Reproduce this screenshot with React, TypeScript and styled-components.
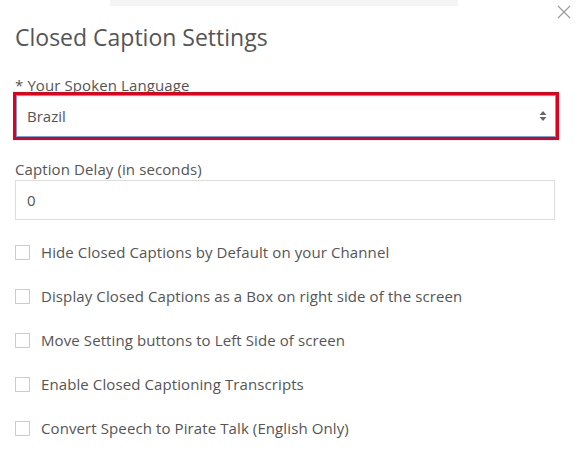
import React from "react";
import styled, { createGlobalStyle } from "styled-components";

const Global = createGlobalStyle`
  html, body { margin: 0; padding: 0; background: #fff; }
  body { font-family: "Open Sans", "Noto Sans", sans-serif; color: #555; }
  * { box-sizing: border-box; }
`;

const Page = styled.div`
  width: 583px;
  height: 470px;
  position: relative;
  overflow: hidden;
`;

const TopStrip = styled.div`
  height: 6px;
  width: 348px;
  margin-left: 110px;
  background: #f4f4f4;
`;

const CloseButton = styled.button`
  position: absolute;
  top: 4px;
  right: 11px;
  width: 16px;
  height: 16px;
  padding: 0;
  border: none;
  background: transparent;
  display: flex;
  align-items: center;
  justify-content: center;
`;

const Body = styled.div`
  padding: 0 28px 0 15px;
  display: flex;
  flex-direction: column;
`;

const Title = styled.h1`
  margin: 16px 0 0;
  font-size: 23px;
  font-weight: 400;
  line-height: 30px;
  color: #555;
`;

const Label = styled.label<{ $mt: number }>`
  display: block;
  font-size: 15px;
  line-height: 20px;
  letter-spacing: 0.1px;
  color: #555;
  margin-top: ${(p) => p.$mt}px;
`;

const Req = styled.abbr`
  text-decoration: underline dotted;
  text-underline-offset: 3px;
  margin-right: 4px;
`;

const SelectBox = styled.div`
  margin-top: 0;
  height: 42px;
  border: 1px solid #7b9fd4;
  box-shadow: 0 0 0 3px #e0001b;
  margin-left: 1px;
  margin-right: -1px;
  display: flex;
  align-items: center;
  justify-content: space-between;
  padding: 0 8px 0 10px;
  font-size: 15px;
  color: #555;
`;

const TextInput = styled.div`
  margin-top: 1px;
  height: 40px;
  border: 1px solid #ddd;
  display: flex;
  align-items: center;
  padding: 0 11px;
  font-size: 15px;
  color: #555;
`;

const Options = styled.div`
  margin-top: 21px;
  display: flex;
  flex-direction: column;
  gap: 22px;
`;

const Row = styled.label`
  display: flex;
  align-items: center;
  gap: 11px;
  height: 22px;
  font-size: 15px;
  letter-spacing: 0.1px;
  color: #555;
`;

const Box = styled.span`
  width: 15px;
  height: 15px;
  border: 1px solid #ccc;
  background: #fff;
  flex: none;
`;

const options = [
  "Hide Closed Captions by Default on your Channel",
  "Display Closed Captions as a Box on right side of the screen",
  "Move Setting buttons to Left Side of screen",
  "Enable Closed Captioning Transcripts",
  "Convert Speech to Pirate Talk (English Only)",
];

export default function App() {
  return (
    <Page>
      <Global />
      <TopStrip />
      <CloseButton aria-label="Close">
        <svg width="14" height="14" viewBox="0 0 14 14">
          <path d="M1 1L13 13M13 1L1 13" stroke="#9a9a9a" strokeWidth="1.1" />
        </svg>
      </CloseButton>
      <Body>
        <Title>Closed Caption Settings</Title>
        <Label $mt={23}>
          <Req title="required">*</Req>Your Spoken Language
        </Label>
        <SelectBox>
          <span>Brazil</span>
          <svg width="8" height="12" viewBox="0 0 8 12">
            <path d="M4 1L7.5 5H0.5Z" fill="#666" />
            <path d="M4 11L7.5 7H0.5Z" fill="#666" />
          </svg>
        </SelectBox>
        <Label $mt={22}>Caption Delay (in seconds)</Label>
        <TextInput>0</TextInput>
        <Options>
          {options.map((o) => (
            <Row key={o}>
              <Box />
              {o}
            </Row>
          ))}
        </Options>
      </Body>
    </Page>
  );
}
